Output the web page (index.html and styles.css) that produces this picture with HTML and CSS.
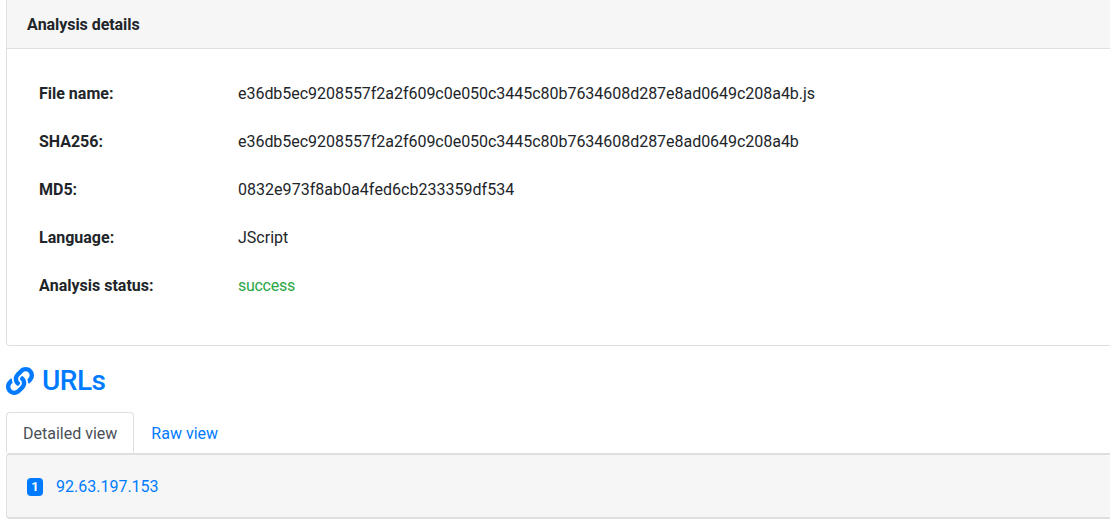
FILE: index.html
```html
<!DOCTYPE html>
<html>
<head>
	<meta charset="utf-8">
	<title>Analysis details</title>
	<link rel="stylesheet" href="styles.css">
</head>
<body>
	<div class="page">
		<div class="card">
			<div class="card-header">Analysis details</div>
			<div class="card-body">
				<div class="detail-row">
					<div class="detail-label">File name:</div>
					<div class="hash-long">e36db5ec9208557f2a2f609c0e050c3445c80b7634608d287e8ad0649c208a4b.js</div>
				</div>
				<div class="detail-row">
					<div class="detail-label">SHA256:</div>
					<div class="hash-long">e36db5ec9208557f2a2f609c0e050c3445c80b7634608d287e8ad0649c208a4b</div>
				</div>
				<div class="detail-row">
					<div class="detail-label">MD5:</div>
					<div class="hash-short">0832e973f8ab0a4fed6cb233359df534</div>
				</div>
				<div class="detail-row">
					<div class="detail-label">Language:</div>
					<div>JScript</div>
				</div>
				<div class="detail-row">
					<div class="detail-label">Analysis status:</div>
					<div class="text-success">success</div>
				</div>
			</div>
		</div>

		<h2 class="section-title">
			<svg class="section-icon" viewBox="0 0 512 512"><path fill="currentColor" d="M326.612 185.391c59.747 59.809 58.927 155.698.36 214.59-.11.12-.24.25-.36.37l-67.2 67.2c-59.27 59.27-155.699 59.262-214.96 0-59.27-59.26-59.27-155.7 0-214.96l37.106-37.106c9.84-9.84 26.786-3.3 27.294 10.606.648 17.722 3.826 35.527 9.69 52.721 1.986 5.822.567 12.262-3.783 16.612l-13.087 13.087c-28.026 28.026-28.905 73.66-1.155 101.96 28.024 28.579 74.086 28.749 102.325.51l67.2-67.19c28.191-28.191 28.073-73.757 0-101.83-3.701-3.694-7.429-6.564-10.341-8.569a16.037 16.037 0 0 1-6.947-12.606c-.396-10.567 3.348-21.456 11.698-29.806l21.054-21.055c5.521-5.521 14.182-6.199 20.584-1.731a152.482 152.482 0 0 1 20.522 17.197zM467.547 44.449c-59.261-59.262-155.69-59.27-214.96 0l-67.2 67.2c-.12.12-.25.25-.36.37-58.566 58.892-59.387 154.781.36 214.59a152.454 152.454 0 0 0 20.521 17.196c6.402 4.468 15.064 3.789 20.584-1.731l21.054-21.055c8.35-8.35 12.094-19.239 11.698-29.806a16.037 16.037 0 0 0-6.947-12.606c-2.912-2.005-6.64-4.875-10.341-8.569-28.073-28.073-28.191-73.639 0-101.83l67.2-67.19c28.239-28.239 74.3-28.069 102.325.51 27.75 28.3 26.872 73.934-1.155 101.96l-13.087 13.087c-4.35 4.35-5.769 10.79-3.783 16.612 5.864 17.194 9.042 34.999 9.69 52.721.509 13.906 17.454 20.446 27.294 10.606l37.106-37.106c59.271-59.259 59.271-155.699.001-214.959z"/></svg>
			URLs
		</h2>

		<ul class="tabs">
			<li class="tab active">Detailed view</li>
			<li class="tab">Raw view</li>
		</ul>
		<div class="url-panel">
			<span class="badge">1</span>
			<a class="url-link" href="#">92.63.197.153</a>
		</div>
	</div>
</body>
</html>
```

FILE: styles.css
```css
html, body {
	margin: 0;
	height: 100%;
	overflow: hidden;
	background: #fff;
}

body {
	font-family: Roboto, "Liberation Sans", sans-serif;
	font-size: 16px;
	line-height: 24px;
	color: #212529;
	font-kerning: none;
}

.page {
	padding-left: 6px;
	margin-right: -20px;
}

.card {
	border: 1px solid #dfdfdf;
	border-top: 0;
	border-radius: 0 0 4px 4px;
}

.card-header {
	height: 49px;
	padding: 13px 20px 0;
	box-sizing: border-box;
	background: #f6f6f6;
	border-bottom: 1px solid #dfdfdf;
	font-weight: 700;
	letter-spacing: -0.06px;
}

.card-body {
	padding: 21px 32px 35px;
}

.detail-row {
	display: flex;
	height: 24px;
	padding: 12px 0;
}

.detail-label {
	width: 199px;
	font-weight: 700;
}

.hash-long {
	letter-spacing: -0.03px;
}

.hash-short {
	letter-spacing: 0.03px;
}

.text-success {
	color: #28a745;
	letter-spacing: -0.28px;
}

.section-title {
	display: flex;
	align-items: center;
	gap: 8px;
	margin: 17px 0 13px;
	font-size: 28px;
	line-height: 36px;
	font-weight: 500;
	letter-spacing: -0.5px;
	color: #007bff;
}

.section-icon {
	width: 28px;
	height: 28px;
}

.tabs {
	display: flex;
	list-style: none;
	margin: 0;
	padding: 0;
}

.tab {
	padding: 9px 16px 6px;
	border: 1px solid transparent;
	border-radius: 4px 4px 0 0;
	color: #007bff;
	height: 24px;
}

.tab.active {
	color: #495057;
	background: #fff;
	border-color: #dfdfdf;
	border-bottom-color: #fff;
}

.url-panel {
	display: flex;
	align-items: center;
	gap: 13px;
	height: 66px;
	box-sizing: border-box;
	padding: 1px 20px 0;
	background: #f6f6f6;
	border: 1px solid #dfdfdf;
	border-top-width: 2px;
	border-bottom-width: 2px;
	border-radius: 4px;
}

.badge {
	display: flex;
	align-items: center;
	justify-content: center;
	width: 16px;
	height: 18px;
	border-radius: 4px;
	background: #007bff;
	color: #fff;
	font-size: 13px;
	font-weight: 700;
	line-height: 1;
}

.url-link {
	color: #007bff;
	text-decoration: none;
}
```
